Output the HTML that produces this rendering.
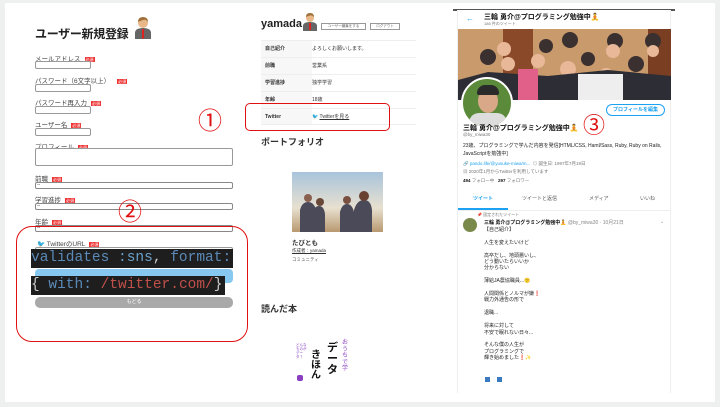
<!DOCTYPE html>
<html><head><meta charset="utf-8"><style>
*{margin:0;padding:0;box-sizing:border-box}
body{width:720px;height:407px;background:#eef0f0;position:relative;overflow:hidden;font-family:"Liberation Sans","Noto Sans CJK JP",sans-serif;color:#333}
.a{position:absolute}
.lab{font-size:6.5px;color:#444}
.req{display:inline-block;background:#e33;color:#fff;font-size:4px;padding:0 1px;margin-left:4px;vertical-align:middle;height:5px;line-height:5px}
.inp{position:absolute;border:1px solid #999;border-radius:2px;background:#fff;height:8px}
.sel{position:absolute;border:1px solid #888;border-radius:2px;background:#fff;height:7px;font-size:5px;line-height:5px;padding-left:1px}
.code{position:absolute;background:#1e1e1e;font-family:"Liberation Mono",monospace;font-size:14.5px;line-height:19px;white-space:nowrap;color:#5b8ab8;overflow:hidden}
.row{position:absolute;left:261px;width:155px;height:17px;border-top:1px solid #eee;font-size:5px;line-height:16px}
.row b{position:absolute;left:4px;font-weight:bold}
.row .v{position:absolute;left:51px}
.t{font-size:5.5px;color:#222}
</style></head><body>
<div class="a" style="left:5px;top:3px;width:710px;height:399px;background:#fff"></div>
<!-- Left -->
<div class="a" style="left:35px;top:25px;font-size:12px;letter-spacing:-0.3px;font-weight:bold;color:#222">ユーザー新規登録</div>
<svg class="a" style="left:134px;top:17px" width="18" height="22"><circle cx="9" cy="6" r="5" fill="#e8b88a"/><path d="M4 5q0-5 5-5t5 5q-2-3-5-2t-5 2z" fill="#a0703a"/><path d="M1 22v-6q0-5 8-5t8 5v6z" fill="#666"/><path d="M8 12h2l0 9-1 1-1-1z" fill="#d22"/></svg>
<div class="a lab" style="left:35px;top:53px">メールアドレス<span class="req">必須</span></div>
<div class="inp" style="left:35px;top:61px;width:56px"></div>
<div class="a lab" style="left:35px;top:75px">パスワード（6文字以上）<span class="req" style="margin-left:7px">必須</span></div>
<div class="inp" style="left:35px;top:84px;width:56px"></div>
<div class="a lab" style="left:35px;top:97px">パスワード再入力<span class="req">必須</span></div>
<div class="inp" style="left:35px;top:106px;width:56px"></div>
<div class="a lab" style="left:35px;top:119px">ユーザー名<span class="req">必須</span></div>
<div class="inp" style="left:35px;top:128px;width:56px"></div>
<div class="a lab" style="left:35px;top:141px">プロフィール<span class="req">必須</span></div>
<div class="inp" style="left:35px;top:148px;width:198px;height:18px"></div>
<div class="a lab" style="left:35px;top:173px">前職<span class="req">必須</span></div>
<div class="sel" style="left:35px;top:182px;width:198px">--</div>
<div class="a lab" style="left:35px;top:194px">学習進捗<span class="req">必須</span></div>
<div class="sel" style="left:35px;top:203px;width:198px">--</div>
<div class="a lab" style="left:35px;top:216px">年齢<span class="req">必須</span></div>
<div class="sel" style="left:35px;top:225px;width:198px">--</div>
<div class="a" style="left:198px;top:101px;font-size:24px;color:#e01010">①</div>
<div class="a" style="left:118px;top:192px;font-size:24px;color:#e01010">②</div>
<div class="a" style="left:16px;top:226px;width:232px;height:116px;border:1.5px solid #e01010;border-radius:16px"></div>
<div class="a lab" style="left:37px;top:238px"><span style="color:#1da1f2">🐦</span> TwitterのURL<span class="req">必須</span></div>
<div class="inp" style="left:35px;top:247px;width:198px"></div>
<div class="a" style="left:35px;top:269px;width:198px;height:14px;background:#86c8f0;border-radius:4px"></div>
<div class="code" style="left:31px;top:249px;width:202px">validates <span style="color:#6a9fc8">:sns</span><span style="color:#ccc">,</span> format:</div>
<div class="code" style="left:31px;top:276px;width:194px"><span style="color:#ccc">{</span> with: <span style="color:#c0504a">/twitter.com/</span><span style="color:#ccc">}</span></div>
<div class="a" style="left:35px;top:297px;width:198px;height:11px;background:#a9a9a9;border-radius:5px;color:#fff;font-size:5px;text-align:center;line-height:11px">もどる</div>
<!-- Middle -->
<div class="a" style="left:261px;top:18px;font-size:11px;font-weight:bold;color:#222">yamada</div>
<svg class="a" style="left:302px;top:13px" width="16" height="18"><circle cx="8" cy="5" r="4" fill="#e8b88a"/><path d="M4 4q0-4 4-4t4 4q-2-2-4-1.5t-4 1.5z" fill="#a0703a"/><path d="M1 18v-5q0-4 7-4t7 4v5z" fill="#666"/><path d="M7 10h2v7h-2z" fill="#d22"/></svg>
<div class="a" style="left:321px;top:23px;width:45px;height:7px;border:1px solid #999;font-size:3.5px;line-height:5px;text-align:center;color:#666">ユーザー編集をする</div>
<div class="a" style="left:370px;top:23px;width:30px;height:7px;border:1px solid #999;font-size:3.5px;line-height:5px;text-align:center;color:#666">ログアウト</div>
<div class="a" style="left:261px;top:40px;width:51px;height:85px;background:#f7f7f7"></div>
<div class="row" style="top:40px"><b>自己紹介</b><span class="v">よろしくお願いします。</span></div>
<div class="row" style="top:57px"><b>前職</b><span class="v">営業系</span></div>
<div class="row" style="top:74px"><b>学習進捗</b><span class="v">独学学習</span></div>
<div class="row" style="top:91px"><b>年齢</b><span class="v">18歳</span></div>
<div class="row" style="top:108px;border-bottom:1px solid #eee"><b>Twitter</b><span class="v"><span style="color:#1da1f2">🐦</span> <u>Twitterを見る</u></span></div>
<div class="a" style="left:245px;top:103px;width:145px;height:28px;border:1.5px solid #e01010;border-radius:5px"></div>
<div class="a" style="left:261px;top:135px;font-size:9px;font-weight:bold;color:#333">ポートフォリオ</div>
<svg class="a" style="left:292px;top:172px" width="91" height="60"><defs><linearGradient id="g" x1="0" y1="0" x2="0" y2="1"><stop offset="0" stop-color="#a8c4dc"/><stop offset=".6" stop-color="#e8e0d0"/><stop offset="1" stop-color="#b89870"/></linearGradient></defs><rect width="91" height="60" fill="url(#g)"/><path d="M8 60v-22q2-8 8-8t8 8v22zM20 60v-18q2-8 7-8t6 8v18zM48 60v-20q2-8 7-8t7 8v20zM62 60v-22q3-10 10-10t8 10v22z" fill="#4a4a58"/><circle cx="16" cy="26" r="4" fill="#8a6050"/><circle cx="28" cy="30" r="4" fill="#6a4838"/><circle cx="55" cy="28" r="4" fill="#7a5040"/><circle cx="72" cy="24" r="5" fill="#6a4030"/></svg>
<div class="a" style="left:292px;top:237px;font-size:6.5px;font-weight:bold">たびとも</div>
<div class="a" style="left:292px;top:248px;font-size:4.5px;text-decoration:underline">作成者：yamada</div>
<div class="a" style="left:292px;top:257px;font-size:4.5px;color:#555">コミュニティ</div>
<div class="a" style="left:261px;top:302px;font-size:9px;font-weight:bold;color:#333">読んだ本</div>
<div class="a" style="left:296px;top:343px;font-size:3.5px;line-height:4px;color:#8a3fc0;width:12px">どんなものがデータ？</div>
<div class="a" style="left:311px;top:351px;font-size:10px;font-weight:bold;line-height:10px;color:#111;width:12px">きほん</div>
<div class="a" style="left:327px;top:343px;font-size:11px;font-weight:bold;line-height:11px;color:#111;width:12px">デ<br>ー<br>タ</div>
<div class="a" style="left:342px;top:340px;font-size:6px;color:#8a3fc0;width:7px;line-height:6.5px">おうちで学</div>
<div class="a" style="left:297px;top:375px;width:6px;height:6px;border-radius:2px;background:#8a3fc0"></div>
<!-- Right -->
<div class="a" style="left:453px;top:9px;width:222px;height:1.5px;background:#555"></div>
<div class="a" style="left:457px;top:10px;width:214px;height:383px;background:#fff;border-left:1px solid #eee;border-right:1px solid #eee"></div>
<div class="a" style="left:466px;top:14px;color:#1da1f2;font-size:8px">←</div>
<div class="a" style="left:484px;top:12px;font-size:7px;font-weight:bold;color:#111">三輪 勇介@プログラミング勉強中🧘</div>
<div class="a" style="left:484px;top:21px;font-size:4px;color:#777">186 件のツイート</div>
<svg class="a" style="left:458px;top:29px" width="213" height="71"><rect width="213" height="71" fill="#c89a6c"/><rect x="45" width="30" height="71" fill="#8a4a2a"/><rect x="190" width="23" height="71" fill="#7a3e22"/><g fill="#3a3030"><circle cx="30" cy="28" r="8"/><circle cx="88" cy="17" r="7"/><circle cx="112" cy="11" r="8"/><circle cx="157" cy="12" r="8"/><circle cx="195" cy="12" r="8"/><circle cx="130" cy="30" r="7"/><circle cx="178" cy="35" r="8"/></g><g fill="#e8b898"><circle cx="46" cy="20" r="7"/><circle cx="50" cy="35" r="7"/><circle cx="80" cy="32" r="7"/><circle cx="110" cy="40" r="8"/><circle cx="155" cy="22" r="7"/><circle cx="148" cy="46" r="7"/><circle cx="195" cy="22" r="6"/></g><path d="M0 71v-20l30 -8 60 4 60-6 63 6v24z" fill="#2d2d35"/><rect x="60" y="40" width="20" height="31" fill="#e0608a"/><rect x="120" y="45" width="45" height="26" fill="#eee"/></svg>
<div class="a" style="left:461px;top:77px;width:52px;height:52px;border-radius:50%;background:#5a8a3a;border:2.5px solid #fff;overflow:hidden"><div style="position:absolute;left:15px;top:10px;width:20px;height:24px;border-radius:50%;background:#d8a888"></div><div style="position:absolute;left:14px;top:6px;width:22px;height:10px;border-radius:8px 8px 2px 2px;background:#2a2a2a"></div><div style="position:absolute;left:6px;top:34px;width:38px;height:20px;border-radius:10px 10px 0 0;background:#ddd"></div></div>
<div class="a" style="left:606px;top:104px;width:59px;height:12px;border:1px solid #1da1f2;border-radius:7px;color:#1da1f2;font-size:5px;font-weight:bold;text-align:center;line-height:10px">プロフィールを編集</div>
<div class="a" style="left:583px;top:108px;font-size:22px;color:#e01010">③</div>
<div class="a" style="left:463px;top:123px;font-size:7px;font-weight:bold;color:#111">三輪 勇介@プログラミング勉強中🧘</div>
<div class="a" style="left:463px;top:132px;font-size:4.5px;color:#777">@by_miwa30</div>
<div class="a t" style="left:463px;top:142px;width:205px;line-height:8px;font-size:5px">23歳、プログラミングで学んだ内容を発信[HTML/CSS, Haml/Sass, Ruby, Ruby on Rails, JavaScriptを勉強中]</div>
<div class="a" style="left:463px;top:161px;font-size:4.5px;color:#777"><span style="color:#1da1f2">🔗 pando.life/@yusuke-miwa/m...</span> &nbsp;◎ 誕生日: 1997年7月19日</div>
<div class="a" style="left:463px;top:169px;font-size:4.5px;color:#777">▦ 2020年1月からTwitterを利用しています</div>
<div class="a" style="left:463px;top:178px;font-size:4.5px;color:#777"><b style="color:#111">494</b> フォロー中 &nbsp; <b style="color:#111">297</b> フォロワー</div>
<div class="a" style="left:457px;top:195px;width:214px;font-size:5px;color:#555">
<span class="a" style="left:16px;color:#1da1f2;font-weight:bold">ツイート</span><span class="a" style="left:65px">ツイートと返信</span><span class="a" style="left:132px">メディア</span><span class="a" style="left:183px">いいね</span></div>
<div class="a" style="left:458px;top:208px;width:50px;height:1.5px;background:#1da1f2"></div>
<div class="a" style="left:458px;top:209.5px;width:213px;height:1px;background:#eee"></div>
<div class="a" style="left:477px;top:212px;font-size:4px;color:#777">📌 固定されたツイート</div>
<div class="a" style="left:463px;top:218px;width:14px;height:14px;border-radius:50%;background:#7a8a4a"></div>
<div class="a" style="left:484px;top:219px;font-size:5px;font-weight:bold;color:#111">三輪 勇介@プログラミング勉強中🧘 <span style="font-weight:normal;color:#888">@by_miwa30 · 10月21日</span></div>
<div class="a" style="left:660px;top:219px;font-size:5px;color:#999">⌄</div>
<div class="a t" style="left:484px;top:227px;line-height:6.4px;font-size:5px">【自己紹介】<br><br>人生を変えたいけど<br><br>高卒だし、地頭悪いし、<br>どう動いたらいいか<br>分からない<br><br>薄給JA農協職員...😕<br><br>人間関係とノルマが嫌❗<br>戦力外通告の形で<br><br>退職...<br><br>将来に対して<br>不安で眠れない日々...<br><br>そんな僕の人生が<br>プログラミングで<br>輝き始めました❗✨</div>
<div class="a" style="left:485px;top:377px;width:5px;height:5px;background:#3a7ac0"></div>
<div class="a" style="left:497px;top:377px;width:5px;height:5px;background:#3a7ac0"></div>
</body></html>
